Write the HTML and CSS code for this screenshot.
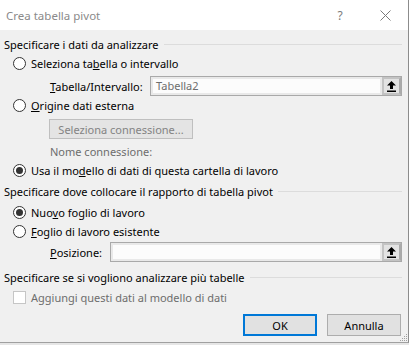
FILE: index.html
```html
<!DOCTYPE html>
<html lang="it">
<head>
  <meta charset="UTF-8" />
  <title>Crea tabella pivot</title>
  <link rel="stylesheet" href="styles.css">
</head>
<body>

  <div class="dialog">

    <!-- Title bar -->
    <div class="titlebar">
      <span class="title">Crea tabella pivot</span>
      <span class="caption-btn help">?</span>
      <span class="caption-btn close">
        <svg width="11" height="11" viewBox="0 0 11 11"><path d="M0.5 0.5 L10.5 10.5 M10.5 0.5 L0.5 10.5" stroke="#7a7a7a" stroke-width="1" fill="none"/></svg>
      </span>
    </div>

    <!-- Source -->
    <div class="group-head sec1"><span>Specificare i dati da analizzare</span></div>
    <div class="radio r1"><span class="mark"></span><span>Seleziona ta<u>b</u>ella o intervallo</span></div>
    <div class="field-row tab-row">
      <span class="label wide"><u>T</u>abella/Intervallo:</span>
      <div class="field">
        <span class="value">Tabella2</span>
        <span class="picker">
          <svg width="9" height="11" viewBox="0 0 9 11"><path d="M4.5 0 L0 4.5 L3 4.5 L3 8 L6 8 L6 4.5 L9 4.5 Z M0 9.5 L9 9.5 L9 11 L0 11 Z" fill="#000"/></svg>
        </span>
      </div>
    </div>
    <div class="radio r2"><span class="mark"></span><span><u>O</u>rigine dati esterna</span></div>
    <div class="conn">Seleziona connessione...</div>
    <div class="conn-name">Nome connessione:</div>
    <div class="radio checked r3"><span class="mark"></span><span>Usa il mo<u>d</u>ello di dati di questa cartella di lavoro</span></div>

    <!-- Destination -->
    <div class="group-head sec2"><span>Specificare dove collocare il rapporto di tabella pivot</span></div>
    <div class="radio checked r4"><span class="mark"></span><span>Nuo<u>v</u>o foglio di lavoro</span></div>
    <div class="radio r5"><span class="mark"></span><span><u>F</u>oglio di lavoro esistente</span></div>
    <div class="field-row pos-row">
      <span class="label"><u>P</u>osizione:</span>
      <div class="field">
        <span class="value"></span>
        <span class="picker">
          <svg width="9" height="11" viewBox="0 0 9 11"><path d="M4.5 0 L0 4.5 L3 4.5 L3 8 L6 8 L6 4.5 L9 4.5 Z M0 9.5 L9 9.5 L9 11 L0 11 Z" fill="#000"/></svg>
        </span>
      </div>
    </div>

    <!-- Multiple tables -->
    <div class="group-head sec3"><span>Specificare se si vogliono analizzare più tabelle</span></div>
    <div class="check"><span class="box"></span><span>Aggiungi questi dati al modello di dati</span></div>

    <div class="actions">
      <button class="ok">OK</button>
      <button>Annulla</button>
    </div>

    <svg class="grip" width="10" height="10" viewBox="0 0 10 10">
      <rect x="8" y="2" width="1" height="1" fill="#a0a0a0"/>
      <rect x="6" y="4" width="1" height="1" fill="#a0a0a0"/>
      <rect x="8" y="4" width="1" height="1" fill="#a0a0a0"/>
      <rect x="4" y="6" width="1" height="1" fill="#a0a0a0"/>
      <rect x="6" y="6" width="1" height="1" fill="#a0a0a0"/>
      <rect x="8" y="6" width="1" height="1" fill="#a0a0a0"/>
      <rect x="2" y="8" width="1" height="1" fill="#a0a0a0"/>
      <rect x="4" y="8" width="1" height="1" fill="#a0a0a0"/>
      <rect x="6" y="8" width="1" height="1" fill="#a0a0a0"/>
      <rect x="8" y="8" width="1" height="1" fill="#a0a0a0"/>
    </svg>
  </div>

</body>
</html>
```

FILE: styles.css
```css
body {
  margin: 0;
  background-color: #e6e6e6;
  font-family: "Noto Sans", "Open Sans", sans-serif;
  font-size: 11px;
  color: #000;
}

.dialog {
  position: relative;
  width: 409px;
  height: 343px;
  box-sizing: border-box;
  background-color: #f0f0f0;
  border-right: 1px solid #8c8c8c;
  border-bottom: 1px solid #a0a0a0;
  display: flex;
  flex-direction: column;
}

.titlebar {
  height: 30px;
  flex-shrink: 0;
  background-color: #fff;
  display: flex;
  align-items: center;
}

.title {
  flex: 1;
  padding-left: 6px;
  font-size: 11.5px;
  color: #8a8a8a;
}

.caption-btn {
  width: 46px;
  height: 30px;
  display: flex;
  align-items: center;
  justify-content: center;
  color: #7a7a7a;
  font-size: 12px;
}

.help {
  margin-right: -1px;
}

.group-head {
  height: 18px;
  display: flex;
  align-items: center;
  gap: 5px;
  padding: 0 6px 0 4px;
  white-space: nowrap;
}

.group-head::after {
  content: "";
  flex: 1;
  height: 1px;
  background-color: #dcdcdc;
}

.radio, .check {
  height: 18px;
  display: flex;
  align-items: center;
  gap: 5px;
  padding-left: 13px;
}

.mark {
  width: 13px;
  height: 13px;
  box-sizing: border-box;
  border: 1px solid #333;
  border-radius: 50%;
  background-color: #fff;
  display: flex;
  align-items: center;
  justify-content: center;
}

.radio.checked .mark::after {
  content: "";
  width: 7px;
  height: 7px;
  border-radius: 50%;
  background-color: #333;
}

.check {
  color: #6d6d6d;
}

.box {
  width: 13px;
  height: 13px;
  box-sizing: border-box;
  border: 1px solid #c6c6c6;
  background-color: #fff;
}

.field-row {
  height: 20px;
  display: flex;
  align-items: center;
  padding: 0 6px 0 50px;
}

.label {
  width: 60px;
}

.label.wide {
  width: 100px;
}

.field {
  flex: 1;
  height: 20px;
  box-sizing: border-box;
  border: 1px solid #a9a9a9;
  background-color: #e9e9e9;
  display: flex;
  padding: 2px;
  gap: 2px;
}

.value {
  flex: 1;
  background-color: #fcfcfc;
  color: #6d6d6d;
  line-height: 14px;
  padding-left: 3px;
}

.picker {
  width: 19px;
  margin: -2px -2px -2px 0;
  box-sizing: border-box;
  border: 2px solid #c3c3c3;
  border-right-color: #ababab;
  background-color: #e3e3e3;
  display: flex;
  align-items: center;
  justify-content: center;
}

.conn {
  width: 144px;
  height: 20px;
  box-sizing: border-box;
  margin-left: 49px;
  border: 1px solid #bfbfbf;
  background-color: #e4e4e4;
  color: #838383;
  display: flex;
  align-items: center;
  justify-content: center;
}

.conn-name {
  height: 16px;
  display: flex;
  align-items: center;
  padding-left: 50px;
  color: #6d6d6d;
}

.sec1 { margin-top: 5px; }
.r1 { margin-top: 1px; }
.tab-row { margin-top: 4px; }
.r2 { margin-top: 0; }
.conn { margin-top: 5px; }
.conn-name { margin-top: 4px; }
.r3 { margin-top: 2px; }
.sec2 { margin-top: 3px; }
.r4 { margin-top: 3px; }
.r5 { margin-top: 1px; }
.pos-row { margin-top: 2px; }
.sec3 { margin-top: 6px; }
.check { margin-top: 2px; }

.actions {
  margin-top: 8px;
  display: flex;
  justify-content: flex-end;
  gap: 10px;
  padding-right: 7px;
}

.actions button {
  width: 74px;
  height: 22px;
  box-sizing: border-box;
  font-family: inherit;
  font-size: 11px;
  color: #000;
  background-color: #e1e1e1;
  border: 1px solid #adadad;
  padding: 0;
}

.actions button.ok {
  border: 2px solid #0078d7;
}

.grip {
  position: absolute;
  right: 0;
  bottom: 0;
}
```
